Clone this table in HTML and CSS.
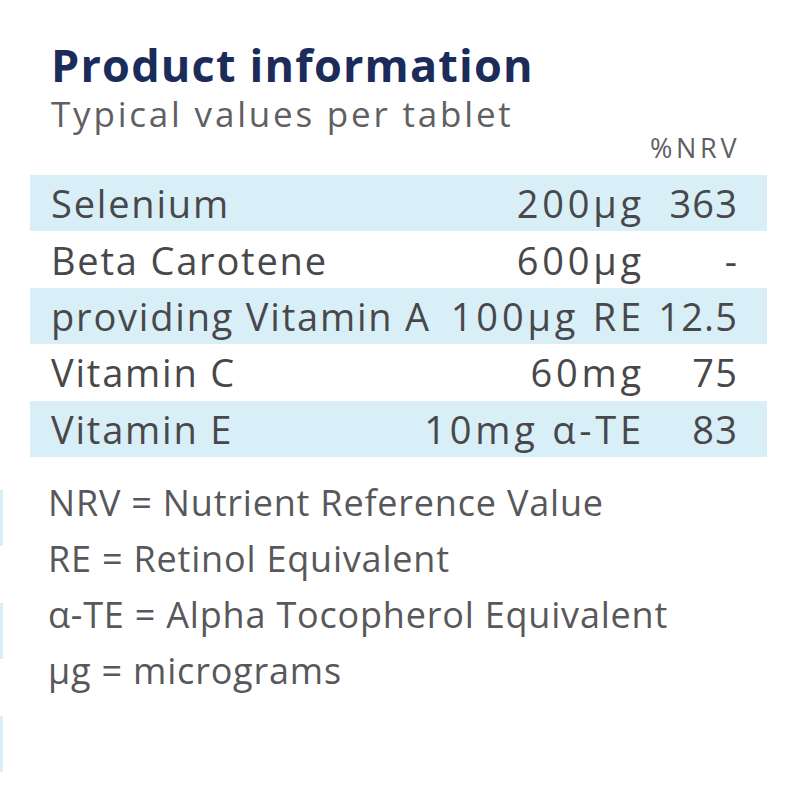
FILE: index.html
```html
<!DOCTYPE html>
<html lang="en">
<head>
<meta charset="utf-8">
<title>Product information</title>
<link rel="stylesheet" href="styles.css">
</head>
<body>
<div class="page">
  <div class="edge">
    <span class="edge-bar"></span>
    <span class="edge-bar"></span>
    <span class="edge-bar"></span>
  </div>
  <main class="panel">
    <h1 class="title">Product information</h1>
    <p class="subtitle">Typical values per tablet</p>
    <div class="nrv-head">%NRV</div>
    <div class="table">
      <div class="row shaded"><span class="name">Selenium</span><span class="amount">200µg</span><span class="nrv">363</span></div>
      <div class="row"><span class="name">Beta Carotene</span><span class="amount">600µg</span><span class="nrv">-</span></div>
      <div class="row shaded"><span class="name">providing Vitamin A</span><span class="amount">100µg RE</span><span class="nrv">12.5</span></div>
      <div class="row"><span class="name">Vitamin C</span><span class="amount">60mg</span><span class="nrv">75</span></div>
      <div class="row shaded"><span class="name">Vitamin E</span><span class="amount">10mg α-TE</span><span class="nrv">83</span></div>
    </div>
    <ul class="notes">
      <li>NRV = Nutrient Reference Value</li>
      <li>RE = Retinol Equivalent</li>
      <li>α-TE = Alpha Tocopherol Equivalent</li>
      <li>µg = micrograms</li>
    </ul>
  </main>
</div>
</body>
</html>
```

FILE: styles.css
```css
html, body {
  margin: 0;
  padding: 0;
  background: #ffffff;
}
body {
  font-family: "Open Sans", Lato, sans-serif;
  font-variant-ligatures: none;
  color: #48484a;
}
.page {
  display: flex;
  width: 800px;
  height: 800px;
  overflow: hidden;
}
.edge {
  width: 3px;
  display: flex;
  flex-direction: column;
  padding-top: 490px;
  gap: 57px;
}
.edge-bar {
  display: block;
  width: 3px;
  height: 56px;
  background: #d9eff7;
}
.panel {
  margin-left: 27px;
  width: 737px;
  padding-top: 38px;
}
.title {
  margin: 0 0 0 21px;
  font-size: 45px;
  font-weight: 700;
  color: #1b2c5a;
  line-height: 54px;
  letter-spacing: 1.2px;
}
.subtitle {
  margin: 2.4px 0 0 21px;
  font-size: 35px;
  font-weight: 400;
  line-height: 40px;
  letter-spacing: 2.8px;
  color: #606062;
}
.nrv-head {
  text-align: right;
  padding-right: 30px;
  margin-right: -3.5px;
  margin-bottom: 12.6px;
  font-size: 27px;
  font-weight: 400;
  line-height: 28px;
  letter-spacing: 3.8px;
  color: #606062;
}
.table {
  display: flex;
  flex-direction: column;
}
.row {
  display: flex;
  align-items: center;
  height: 56.4px;
  padding: 0 30px 0 21px;
  font-size: 38px;
}
.row.shaded {
  background: #d9eff7;
}
.name {
  flex: 1;
  letter-spacing: 1.8px;
}
.amount {
  text-align: right;
  letter-spacing: 3.8px;
  margin-right: -3.8px;
}
.nrv {
  width: 97px;
  text-align: right;
  letter-spacing: 1.2px;
  margin-right: -1.2px;
}
.notes {
  list-style: none;
  margin: 18px 0 0 18px;
  padding: 0;
  font-size: 36px;
  line-height: 56px;
  letter-spacing: 0.8px;
  color: #58585a;
}
```
